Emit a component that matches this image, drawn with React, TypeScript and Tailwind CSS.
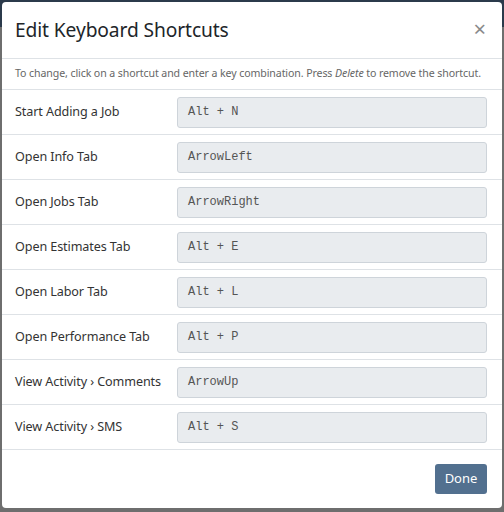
import React from "react";

const rows: [string, string][] = [
  ["Start Adding a Job", "Alt + N"],
  ["Open Info Tab", "ArrowLeft"],
  ["Open Jobs Tab", "ArrowRight"],
  ["Open Estimates Tab", "Alt + E"],
  ["Open Labor Tab", "Alt + L"],
  ["Open Performance Tab", "Alt + P"],
  ["View Activity \u203A Comments", "ArrowUp"],
  ["View Activity \u203A SMS", "Alt + S"],
];

export default function App() {
  return (
    <div
      className="relative w-[504px] h-[512px] overflow-hidden bg-[#6e6e6e]"
      style={{ fontFamily: '"Noto Sans", "Open Sans", sans-serif' }}
    >
      <div className="h-[27px] bg-[#2b3a4b]" />
      <div className="absolute left-[2px] top-[2px] w-[500px] h-[506px] bg-white rounded-[4px] flex flex-col">
        <div className="h-[57px] shrink-0 flex items-center justify-between pl-[13px] pr-[16px] border-b border-[#dee2e6]">
          <h1 className="text-[19.2px] text-[#212529] leading-none tracking-[-0.1px]">Edit Keyboard Shortcuts</h1>
          <span className="text-[22px] leading-none text-[#8a8a8a] -mt-[4px]">×</span>
        </div>
        <div className="h-[31px] shrink-0 flex items-center pl-[13px] text-[10.6px] text-[#666] border-b border-[#dee2e6] tracking-[-0.1px]">
          <span>
            To change, click on a shortcut and enter a key combination. Press <i>Delete</i> to remove the shortcut.
          </span>
        </div>
        {rows.map(([label, key]) => (
          <div key={label} className="h-[45px] flex items-center border-b border-[#dee2e6] shrink-0">
            <div className="w-[175px] pl-[13px] text-[12.6px] text-[#333] tracking-[-0.1px]">{label}</div>
            <div
              className="w-[310px] h-[31px] bg-[#e9ecef] border border-[#ced4da] rounded-[3px] flex items-center pl-[10px] text-[12px] text-[#555]"
              style={{ fontFamily: '"Liberation Mono", "DejaVu Sans Mono", monospace' }}
            >
              {key}
            </div>
          </div>
        ))}
        <div className="flex-1 flex items-center justify-end pr-[15px]">
          <button className="w-[52px] h-[30px] rounded-[3px] bg-[#52708f] text-white text-[13px]">Done</button>
        </div>
      </div>
    </div>
  );
}
